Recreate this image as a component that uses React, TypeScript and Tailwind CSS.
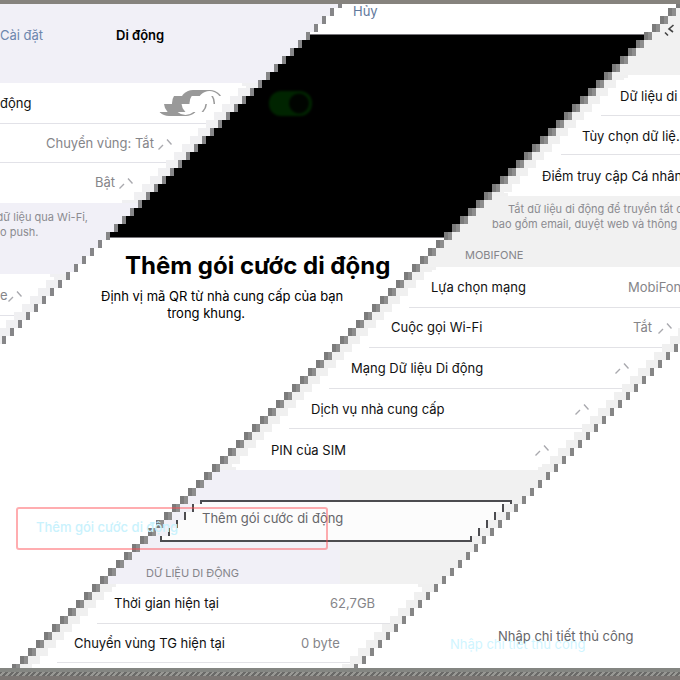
import type { ReactNode } from "react";

const STEP = 8;
const BOTTOM = 668;
const INSET = 12;

const LEFT_CARDS = [[83, 203], [274, 400]];
const LEFT_LINES = [123, 162, 315];
const RIGHT_CARDS = [[75, 196], [267, 470], [584, 700]];
const RIGHT_LINES = [115, 154, 307, 347, 388, 428, 623, 662];
const BOX = [500, 542];
const CAMERA = [35, 237];

type Cell = { width: number; color?: string };

// every y where one of the bands changes colour or steps sideways
const CUTS = Array.from(
  new Set([
    ...Array.from({ length: 84 }, (_, i) => i * STEP),
    ...[...LEFT_CARDS, ...RIGHT_CARDS].flatMap(([a, b]) => [a, a + 3, b - 3, b]),
    ...[...LEFT_LINES, ...RIGHT_LINES].flatMap((y) => [y, y + 1]),
    BOX[0], BOX[0] + 2, BOX[1] - 2, BOX[1],
    CAMERA[0] - 1, CAMERA[0], CAMERA[1], CAMERA[1] + 1,
    BOTTOM,
  ]),
)
  .filter((y) => y <= BOTTOM)
  .sort((a, b) => a - b);

function cornerOf(y: number, cards: number[][]) {
  const card = cards.find(([a, b]) => y >= a && y < b);
  if (!card) return -1;
  return y < card[0] + 3 || y >= card[1] - 3 ? 4 : 0;
}

function cameraColor(y: number) {
  if (y === CAMERA[0] - 1 || y === CAMERA[1]) return "#77757a";
  return y >= CAMERA[0] && y < CAMERA[1] ? "#000000" : "#ffffff";
}

function cellsAt(y: number): Cell[] {
  const shift = Math.floor(y / STEP) * STEP;
  const a = 338 - shift;
  const b = 676 - shift;
  const c = 1018 - shift;
  const cells: Cell[] = [];

  if (a > 0) {
    const corner = cornerOf(y, LEFT_CARDS);
    if (corner >= 0) {
      const gap = Math.min(a, INSET + corner);
      cells.push({ width: a - gap, color: LEFT_LINES.includes(y) ? "#e2e2e8" : "#ffffff" });
      cells.push({ width: gap, color: "#f0f0f2" });
    } else {
      cells.push({ width: a });
    }
    cells.push({ width: 4, color: "#868688" });
  }
  cells.push({ width: a > 0 ? b - a - 4 : b, color: cameraColor(y) });
  cells.push({ width: 4, color: "#7b7b7b" }, { width: 4, color: "#8e8e8e" });

  const body = c - b - 8;
  if (y >= BOX[0] && y < BOX[1]) {
    const edge = y < BOX[0] + 2 || y >= BOX[1] - 2;
    cells.push(
      { width: INSET },
      { width: 2, color: "#4c4c50" },
      { width: body - INSET * 2 - 2, color: edge ? "#4c4c50" : "#fcfcfc" },
      { width: 2, color: "#4c4c50" },
      { width: INSET - 2 },
    );
  } else {
    const corner = cornerOf(y, RIGHT_CARDS);
    if (corner >= 0) {
      const gap = INSET + corner;
      const line = RIGHT_LINES.includes(y);
      cells.push(
        { width: gap, color: "#f0f0f0" },
        { width: 17, color: "#ffffff" },
        { width: body - gap * 2 - 17, color: line ? "#e2e2e6" : "#ffffff" },
        { width: gap, color: "#f0f0f0" },
      );
    } else {
      cells.push({ width: body });
    }
  }
  cells.push({ width: 4, color: "#868686" });
  return cells;
}

function Backdrop() {
  return (
    <div aria-hidden="true" className="absolute inset-0 -z-10 flex overflow-hidden bg-[#f1f1f1]">
      <div className="w-1/2 bg-[#f1f0f7]" />
      <div className="absolute inset-0 flex flex-col">
        {CUTS.slice(0, -1).map((y, i) => (
          <div key={y} className="flex shrink-0" style={{ height: CUTS[i + 1] - y }}>
            {cellsAt(y).map((cell, j) => (
              <span key={j} className="shrink-0" style={{ width: cell.width, background: cell.color }} />
            ))}
            <span className="flex-1 bg-white" />
          </div>
        ))}
      </div>
      <div className="absolute inset-x-0 top-0 h-1 bg-[#86837e]" />
    </div>
  );
}

function Chevron({ className = "" }: { className?: string }) {
  return (
    <svg viewBox="0 0 14 11" aria-hidden="true" className={`h-[11px] w-[14px] shrink-0 ${className}`} fill="none" stroke="#a9a9ae" strokeWidth="1.4">
      <path d="M9 .5 13.5 5.5M5 6 .5 10.5" />
    </svg>
  );
}

const TOGGLE_STRIPS = [
  { y: 0, h: 6, x: 24 },
  { y: 6, h: 8, x: 16 },
  { y: 14, h: 8, x: 8 },
  { y: 22, h: 5, x: 0 },
];

function Toggle() {
  return (
    <label className="ml-[125px] h-7 w-[68px] shrink-0">
      <input type="checkbox" defaultChecked className="sr-only" aria-label="Dữ liệu di động" />
      <svg viewBox="0 0 68 28" aria-hidden="true" className="h-7 w-[68px]">
        {TOGGLE_STRIPS.map((s) => (
          <g key={s.y} clipPath={`url(#strip-${s.y})`}>
            <clipPath id={`strip-${s.y}`}>
              <rect x="0" y={s.y} width="68" height={s.h} />
            </clipPath>
            <g transform={`translate(${s.x} 0)`}>
              <rect width="43" height="26" rx="13" fill="#999999" />
              <circle cx="29.500" cy="13" r="12" fill="#ffffff" />
            </g>
          </g>
        ))}
      </svg>
    </label>
  );
}

function Row({ children, className = "h-10" }: { children: ReactNode; className?: string }) {
  return <div className={`flex items-center overflow-hidden whitespace-nowrap ${className}`}>{children}</div>;
}

export default function App() {
  return (
    <main className="relative isolate flex min-h-screen flex-col overflow-hidden font-['Inter','Liberation_Sans',sans-serif] text-[13px] text-[#111]">
      <Backdrop />

      <Row className="h-6">
        <button className="ml-[353px] text-[#5f789c]">Hủy</button>
      </Row>
      <Row className="h-6">
        <a href="#settings" className="w-[116px] text-[#6c86ad]">Cài đặt</a>
        <h2 className="font-semibold text-black">Di động</h2>
        <svg viewBox="0 0 12 14" aria-hidden="true" className="ml-auto mr-1 h-3.5 w-3 shrink-0 self-start" fill="none" stroke="#444" strokeWidth="1.6">
          <path d="M9.500 1 5 5l4 3M1 8.500l3 3" />
        </svg>
      </Row>

      <Row className="mt-9 h-10">
        <span className="w-[31px]">động</span>
        <Toggle />
        <svg viewBox="0 0 48 28" aria-hidden="true" className="ml-11 h-7 w-12 shrink-0 blur-[1px]">
          <rect x="1" y="1" width="43" height="25" rx="12" fill="#002400" />
          <circle cx="31" cy="13.500" r="10" fill="#000400" />
        </svg>
        <span className="ml-auto w-[60px] self-start leading-6">Dữ liệu di động</span>
      </Row>
      <Row>
        <a href="#roaming" className="ml-[46px] flex items-center text-[#858589]">
          Chuyển vùng: Tắt
          <Chevron className="ml-1" />
        </a>
        <a href="#options" className="ml-auto w-[98px] self-start leading-6">Tùy chọn dữ liệ...</a>
      </Row>
      <Row className="h-[38px]">
        <a href="#hotspot" className="ml-[95px] flex items-center text-[#858589]">
          Bật
          <Chevron className="ml-1" />
        </a>
        <a href="#access" className="ml-auto w-[138px] self-start leading-6">Điểm truy cập Cá nhân</a>
      </Row>

      <div className="flex h-11 justify-between overflow-hidden whitespace-nowrap text-[11px] leading-[15px] text-[#8b8b90]">
        <p className="flex w-[88px] flex-col items-end pt-2">
          <span>tất cả dữ liệu qua Wi-Fi,</span>
          <span className="self-start">o push.</span>
        </p>
        <p className="w-[188px]">
          <span className="block pl-4">Tắt dữ liệu di động để truyền tất cả</span>
          <span className="block">bao gồm email, duyệt web và thông báo</span>
        </p>
      </div>

      <section className="flex h-[102px] overflow-hidden whitespace-nowrap">
        <div className="w-[391px] shrink-0">
          <h1 className="ml-[125px] text-2xl leading-10 font-bold text-black">Thêm gói cước di động</h1>
          <div className="mt-0.5 flex">
            <a href="#network" className="flex h-4 w-[101px] shrink-0 items-center text-[#858589]">
              e
              <Chevron />
            </a>
            <p className="text-center leading-[17px] text-black">
              Định vị mã QR từ nhà cung cấp của bạn
              <br />
              <span className="mr-8">trong khung.</span>
            </p>
          </div>
        </div>
        <div className="flex-1">
          <h3 className="ml-[74px] h-[22px] text-[11px] leading-[18px] text-[#85858a]">MOBIFONE</h3>
          <Row>
            <a href="#carrier" className="ml-10 flex flex-1 justify-between">
              Lựa chọn mạng
              <span className="w-[52px] text-[#858589]">MobiFone</span>
            </a>
          </Row>
          <Row>
            <a href="#wifi-calling" className="flex flex-1 items-center">
              Cuộc gọi Wi-Fi
              <span className="ml-auto mr-1.5 text-[#858589]">Tắt</span>
              <Chevron className="mr-2" />
            </a>
          </Row>
        </div>
      </section>

      <Row className="h-[41px]">
        <a href="#mobile-network" className="ml-[351px] flex w-[278px] items-center justify-between">
          Mạng Dữ liệu Di động
          <Chevron />
        </a>
      </Row>
      <Row className="h-[41px]">
        <a href="#services" className="ml-[311px] flex w-[278px] items-center justify-between">
          Dịch vụ nhà cung cấp
          <Chevron />
        </a>
      </Row>
      <Row className="h-[41px]">
        <a href="#sim-pin" className="ml-[271px] flex w-[278px] items-center justify-between">
          PIN của SIM
          <Chevron />
        </a>
      </Row>

      <div className="relative mt-[29px] h-[42px]">
        <button className="ml-[202px] h-[38px] w-[270px] text-left text-[#66666a]">Thêm gói cước di động</button>
        <div className="absolute top-[7px] left-4 h-[43px] w-[312px] rounded-[3px] border-2 border-[#ff4a50]/45 pl-[18px] leading-9 font-medium text-[#c9f2fd]">
          Thêm gói cước di động
        </div>
      </div>

      <h3 className="mt-5 ml-[146px] text-[11px] leading-[22px] text-[#85858a]">DỮ LIỆU DI ĐỘNG</h3>
      <Row>
        <span className="ml-[114px] w-[216px]">Thời gian hiện tại</span>
        <span className="text-[#858589]">62,7GB</span>
      </Row>
      <Row>
        <span className="ml-[74px] w-[227px]">Chuyển vùng TG hiện tại</span>
        <span className="w-[149px] text-[#858589]">0 byte</span>
        <div className="relative h-10">
          <span aria-hidden="true" className="absolute top-2 left-0 leading-6 text-[#cff5ff]">Nhập chi tiết thủ công</span>
          <a href="#manual" className="relative ml-12 leading-6 text-[#66666a]">Nhập chi tiết thủ công</a>
        </div>
      </Row>

      <footer className="mt-1 h-3 bg-[#7b7673]">
        <div className="h-1 bg-[#848682]" />
        <div className="h-1 bg-[repeating-linear-gradient(135deg,#6a6a68_0_2px,#989894_2px_4px)]" />
      </footer>
    </main>
  );
}
